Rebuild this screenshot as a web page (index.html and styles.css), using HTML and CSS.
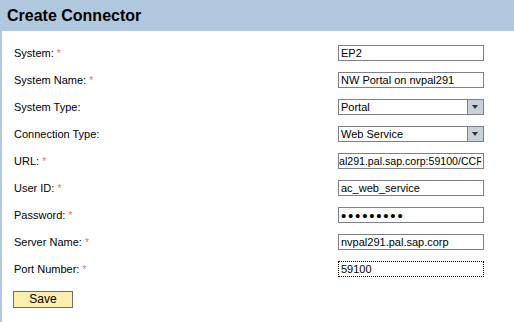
FILE: index.html
```html
<!DOCTYPE html>
<html lang="en">
  <head>
    <meta charset="UTF-8" />
    <meta name="viewport" content="width=device-width, initial-scale=1.0" />
    <title>Create Connector</title>

    <link rel="stylesheet" href="styles.css">
  </head>
  <body>
    <div class="panel">
      <!-- Panel title -->
      <h1 class="panel-title">Create Connector</h1>

      <form class="connector-form">
        <label class="field-label" for="system">System: <span class="req">*</span></label>
        <input class="field-input" id="system" type="text" value="EP2">

        <label class="field-label" for="system-name">System Name: <span class="req">*</span></label>
        <input class="field-input" id="system-name" type="text" value="NW Portal on nvpal291">

        <span class="field-label">System Type:</span>
        <div class="field-select">
          <span class="select-value">Portal</span>
          <span class="select-btn"></span>
        </div>

        <span class="field-label">Connection Type:</span>
        <div class="field-select">
          <span class="select-value">Web Service</span>
          <span class="select-btn"></span>
        </div>

        <label class="field-label" for="url">URL: <span class="req">*</span></label>
        <input class="field-input url" id="url" type="text" value="al291.pal.sap.corp:59100/CCR">

        <label class="field-label" for="user-id">User ID: <span class="req">*</span></label>
        <input class="field-input" id="user-id" type="text" value="ac_web_service">

        <label class="field-label" for="password">Password: <span class="req">*</span></label>
        <input class="field-input password" id="password" type="password" value="secret123">

        <label class="field-label" for="server-name">Server Name: <span class="req">*</span></label>
        <input class="field-input" id="server-name" type="text" value="nvpal291.pal.sap.corp">

        <label class="field-label" for="port">Port Number: <span class="req">*</span></label>
        <input class="field-input focused" id="port" type="text" value="59100">

        <!-- Save button -->
        <div class="form-actions">
          <button class="save-btn" type="button">Save</button>
        </div>
      </form>
    </div>
  </body>
</html>
```

FILE: styles.css
```css
body {
  margin: 0;
  font-family: "Liberation Sans", Arial, sans-serif;
  background: #fff;
}

/* Panel with blue header and left border */
.panel {
  min-height: 322px;
  border-left: 2px solid #b0c8de;
  box-sizing: border-box;
}

.panel-title {
  margin: 0 0 0 -2px;
  height: 31px;
  line-height: 31px;
  padding-left: 7px;
  background: #b0c8de;
  font-size: 16px;
  font-weight: bold;
  color: #000;
}

/* Form grid: labels left, fields right */
.connector-form {
  display: grid;
  grid-template-columns: 324px 146px;
  grid-auto-rows: 16px;
  row-gap: 11px;
  align-items: center;
  padding: 14px 0 0 12px;
}

.field-label {
  font-size: 11px;
  color: #000;
}

.req {
  color: #e0707c;
  font-size: 10px;
}

.field-input {
  box-sizing: border-box;
  width: 146px;
  height: 16px;
  margin: 0;
  padding: 0 2px;
  border: 1px solid #7f7f8c;
  font-family: "Liberation Sans", Arial, sans-serif;
  font-size: 11px;
  color: #000;
  outline: none;
}

.field-input.url {
  padding-left: 0;
  font-size: 10.6px;
}

/* bigger bullets, like the old browser */
.field-input.password {
  font-size: 15px;
  letter-spacing: 1.8px;
  line-height: 14px;
}

.field-input.focused {
  border: 1px dotted #000;
}

/* Fake dropdown box */
.field-select {
  box-sizing: border-box;
  display: flex;
  width: 146px;
  height: 16px;
  border: 1px solid #7f7f8c;
  font-size: 11px;
}

.select-value {
  flex: 1;
  padding-left: 2px;
  line-height: 14px;
}

.select-btn {
  width: 15px;
  background: #c8d0da;
  border-left: 1px solid #7f7f8c;
  position: relative;
}

/* triangle of the dropdown button */
.select-btn::after {
  content: "";
  position: absolute;
  left: 4px;
  top: 5px;
  border-left: 3px solid transparent;
  border-right: 3px solid transparent;
  border-top: 4px solid #333;
}

.form-actions {
  grid-column: 1 / 3;
  margin-top: 5px;
  margin-left: -1px;
}

.save-btn {
  width: 60px;
  height: 17px;
  padding: 0;
  background: #fbeeaf;
  border: 1px solid #707070;
  font-family: "Liberation Sans", Arial, sans-serif;
  font-size: 12px;
  color: #000;
  cursor: pointer;
}
```
